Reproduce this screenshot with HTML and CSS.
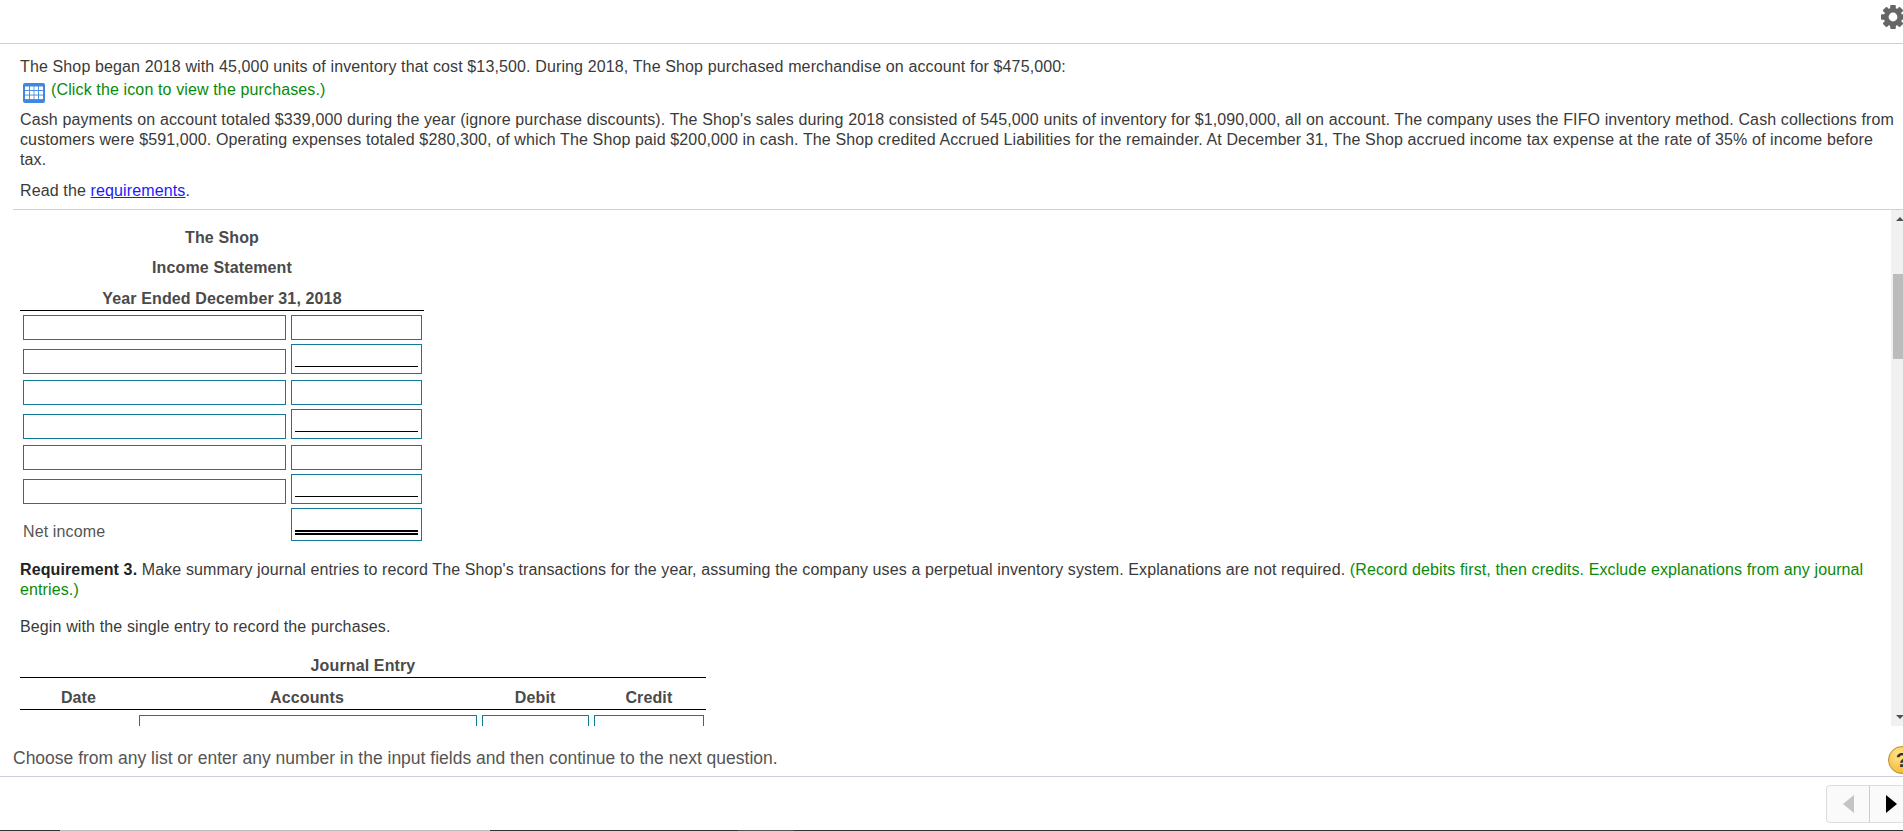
FILE: index.html
```html
<!DOCTYPE html>
<html lang="en">
<head>
<meta charset="utf-8">
<title>The Shop</title>
<link rel="stylesheet" href="styles.css">
</head>
<body>
<header class="topbar">
  <svg class="gear" viewBox="0 0 24 24" aria-label="Settings">
    <g fill="#666">
      <rect x="9.2" y="0" width="5.6" height="24" rx="1"/>
      <rect x="9.2" y="0" width="5.6" height="24" rx="1" transform="rotate(45 12 12)"/>
      <rect x="9.2" y="0" width="5.6" height="24" rx="1" transform="rotate(90 12 12)"/>
      <rect x="9.2" y="0" width="5.6" height="24" rx="1" transform="rotate(135 12 12)"/>
      <circle cx="12" cy="12" r="9.2"/>
    </g>
    <circle cx="12" cy="12" r="4.4" fill="#fff"/>
  </svg>
</header>

<section class="intro">
  <p class="line">The Shop began 2018 with 45,000 units of inventory that cost $13,500. During 2018, The Shop purchased merchandise on account for $475,000:</p>
  <p class="line click-row">
    <svg class="grid-icon" viewBox="0 0 22 20" aria-label="Purchases table">
      <rect width="22" height="20" rx="2" fill="#3f87e2"/>
      <g fill="#fff">
        <rect x="2" y="3.5" width="4" height="3.6"/><rect x="6.9" y="3.5" width="3.7" height="3.6"/><rect x="11.4" y="3.5" width="3.7" height="3.6"/><rect x="16" y="3.5" width="4" height="3.6"/>
        <rect x="2" y="8" width="4" height="3.6"/><rect x="6.9" y="8" width="3.7" height="3.6"/><rect x="11.4" y="8" width="3.7" height="3.6"/><rect x="16" y="8" width="4" height="3.6"/>
        <rect x="2" y="12.5" width="4" height="3.6"/><rect x="6.9" y="12.5" width="3.7" height="3.6"/><rect x="11.4" y="12.5" width="3.7" height="3.6"/><rect x="16" y="12.5" width="4" height="3.6"/>
      </g>
    </svg>
    <span class="hint">(Click the icon to view the purchases.)</span>
  </p>
  <p class="para">Cash payments on account totaled $339,000 during the year (ignore purchase discounts). The Shop's sales during 2018 consisted of 545,000 units of inventory for $1,090,000, all on account. The company uses the FIFO inventory method. Cash collections from customers were $591,000. Operating expenses totaled $280,300, of which The Shop paid $200,000 in cash. The Shop credited Accrued Liabilities for the remainder. At December 31, The Shop accrued income tax expense at the rate of 35% of income before tax.</p>
  <p class="line read">Read the <a class="link" href="#requirements">requirements</a>.</p>
</section>

<main class="pane">
  <div class="pane-body">
    <div class="statement">
      <div class="st-head">The Shop</div>
      <div class="st-head st-head-mid">Income Statement</div>
      <div class="st-head st-head-last">Year Ended December 31, 2018</div>
    </div>
    <div class="st-rows">
      <div class="row"><input class="field wide" type="text"><input class="field narrow" type="text"></div>
      <div class="row row-gap"><input class="field wide" type="text"><div class="field narrow cell-sub"><span class="rule"></span></div></div>
      <div class="row"><input class="field wide" type="text"><input class="field narrow" type="text"></div>
      <div class="row row-gap"><input class="field wide" type="text"><div class="field narrow cell-sub"><span class="rule"></span></div></div>
      <div class="row"><input class="field wide" type="text"><input class="field narrow" type="text"></div>
      <div class="row"><input class="field wide" type="text"><div class="field narrow cell-sub"><span class="rule"></span></div></div>
      <div class="row"><span class="net">Net income</span><div class="field narrow cell-total"><span class="rule-double"></span></div></div>
    </div>

    <p class="req"><strong class="req-label">Requirement 3.</strong> Make summary journal entries to record The Shop's transactions for the year, assuming the company uses a perpetual inventory system. Explanations are not required. <span class="hint">(Record debits first, then credits. Exclude explanations from any journal entries.)</span></p>
    <p class="begin">Begin with the single entry to record the purchases.</p>

    <div class="journal">
      <div class="j-title">Journal Entry</div>
      <div class="j-head">
        <span class="j-date">Date</span>
        <span class="j-acct">Accounts</span>
        <span class="j-debit">Debit</span>
        <span class="j-credit">Credit</span>
      </div>
      <div class="j-row">
        <input class="field j-in-acct" type="text">
        <input class="field j-in-debit" type="text">
        <input class="field j-in-credit" type="text">
      </div>
    </div>
  </div>
  <div class="scrollbar">
    <span class="arrow-up"></span>
    <span class="thumb"></span>
    <span class="arrow-down"></span>
  </div>
</main>

<footer class="footer">
  <div class="status">
    <span class="status-text">Choose from any list or enter any number in the input fields and then continue to the next question.</span>
    <span class="help">?</span>
  </div>
  <div class="nav">
    <div class="nav-box">
      <span class="nav-btn"><span class="tri-left"></span></span>
      <span class="nav-btn nav-next"><span class="tri-right"></span></span>
    </div>
  </div>
  <div class="edge">
    <span class="seg seg-a"></span><span class="seg seg-b"></span><span class="seg seg-c"></span><span class="seg seg-d"></span><span class="seg seg-e"></span>
  </div>
</footer>
</body>
</html>
```

FILE: styles.css
```css
* { box-sizing: border-box; }
html, body { margin: 0; padding: 0; height: 831px; overflow: hidden; background: #fff; }
body {
  width: 1903px;
  font-family: "Liberation Sans", Arial, sans-serif;
  font-size: 16px;
  letter-spacing: 0.13px;
  line-height: 20px;
  color: #3a3a3a;
}
p { margin: 0; }

.topbar {
  height: 44px;
  border-bottom: 1px solid #cfcfdc;
  display: flex;
  justify-content: flex-end;
  padding-top: 5px;
}
.gear { width: 24px; height: 24px; display: block; flex: none; margin-right: -2px; }

.intro { height: 165px; padding: 13px 0 0 20px; }
.line { height: 20px; white-space: nowrap; }
.click-row { display: flex; align-items: flex-start; margin-top: 3px; height: 20px; margin-left: 3px; }
.grid-icon { width: 22px; height: 20px; margin: 3px 6px 0 0; flex: none; }
.hint { color: #0a8a0a; }
.para { margin-top: 10px; width: 1880px; letter-spacing: 0.12px; }
.read { margin-top: 11px; }
.link { color: #1a1aff; text-decoration: underline; }

.pane {
  margin-left: 13px;
  height: 517px;
  border-top: 1px solid #cfcfdc;
  display: flex;
}
.pane-body { width: 1878px; height: 516px; padding: 12px 0 0 7px; overflow: hidden; }

.statement { width: 404px; border-bottom: 1px solid #000; color: #4a4a4a; font-weight: 700; text-align: center; }
.st-head { height: 31px; line-height: 31px; }
.st-head-mid { height: 30px; line-height: 30px; }
.st-head-last { height: 27px; line-height: 31px; }

.st-rows { width: 404px; padding: 4px 0 0 3px; }
.row { display: flex; align-items: flex-end; gap: 5px; margin-bottom: 4px; }
.row-gap { margin-bottom: 6px; }

.field { display: block; flex: none; border: 1px solid #12799a; border-radius: 0; background: #fff; height: 25px; padding: 0; margin: 0; }
.wide { width: 263px; }
.narrow { width: 131px; }
.cell-sub { height: 30px; padding: 0 3px 6px; display: flex; align-items: flex-end; }
.cell-total { height: 33px; padding: 0 3px 5px; display: flex; align-items: flex-end; }
.rule { display: block; width: 100%; border-bottom: 1px solid #000; }
.rule-double { display: block; width: 100%; border-bottom: 5px double #000; }
.net { display: block; width: 263px; color: #555; margin-bottom: -1px; }

.req { margin-top: 19px; letter-spacing: 0.115px; }
.req-label { color: #222; }
.begin { margin-top: 17px; }

.journal { width: 686px; margin-top: 20px; }
.j-title { height: 21px; line-height: 18px; border-bottom: 1px solid #000; text-align: center; font-weight: 700; color: #4a4a4a; }
.j-head { height: 32px; border-bottom: 1px solid #000; font-weight: 700; color: #4a4a4a; display: flex; text-align: center; padding-top: 10px; }
.j-date { width: 117px; }
.j-acct { width: 340px; }
.j-debit { width: 116.4px; }
.j-credit { width: 111px; }
.j-row { display: flex; padding: 5px 0 0 119px; gap: 5px; }
.j-in-acct { width: 338px; }
.j-in-debit { width: 107px; }
.j-in-credit { width: 110px; }

.scrollbar { width: 12px; height: 516px; background: #f1f1f1; display: flex; flex-direction: column; padding-left: 2px; }
.arrow-up { display: block; width: 0; height: 0; margin: 7px 0 0 3px; border: 4px solid transparent; border-top: 0; border-bottom-color: #505050; }
.thumb { display: block; width: 10px; height: 85px; margin-top: 53px; background: #bcbcbc; }
.arrow-down { display: block; width: 0; height: 0; margin: auto 0 7px 3px; border: 4px solid transparent; border-bottom: 0; border-top-color: #505050; }

.footer { height: 105px; }
.status { height: 51px; border-bottom: 1px solid #cfcfdc; padding: 0 0 0 13px; display: flex; justify-content: space-between; align-items: flex-start; }
.status-text { font-size: 17.5px; letter-spacing: 0; line-height: 20px; color: #555; margin-top: 22px; }
.help {
  flex: none;
  width: 28px; height: 28px;
  margin: 20px -13px 0 0;
  border-radius: 50%;
  border: 1px solid #b98a2a;
  background: radial-gradient(circle at 40% 30%, #ffe58f, #f5bf45 70%, #d99a28);
  color: #333;
  font-weight: 700;
  font-size: 20px;
  line-height: 26px;
  text-align: center;
}
.nav { height: 53px; padding-top: 8px; display: flex; justify-content: flex-end; }
.nav-box { display: flex; height: 38px; margin-right: -9px; border: 1px solid #ddd; border-radius: 4px; background: #fafafa; }
.nav-btn { width: 42px; display: flex; align-items: center; justify-content: center; }
.nav-next { border-left: 1px solid #ccc; justify-content: flex-start; padding-left: 16px; }
.tri-left { width: 0; height: 0; border: 9px solid transparent; border-left: 0; border-right: 11px solid #c4c4c4; }
.tri-right { width: 0; height: 0; border: 9px solid transparent; border-right: 0; border-left: 11px solid #000; }

.edge { display: flex; height: 1px; }
.seg { display: block; height: 1px; }
.seg-a { width: 60px; background: #333; }
.seg-b { width: 430px; background: #bbb; }
.seg-c { width: 248px; background: #333; }
.seg-d { width: 56px; background: #555; }
.seg-e { flex: 1; background: #333; }
```
